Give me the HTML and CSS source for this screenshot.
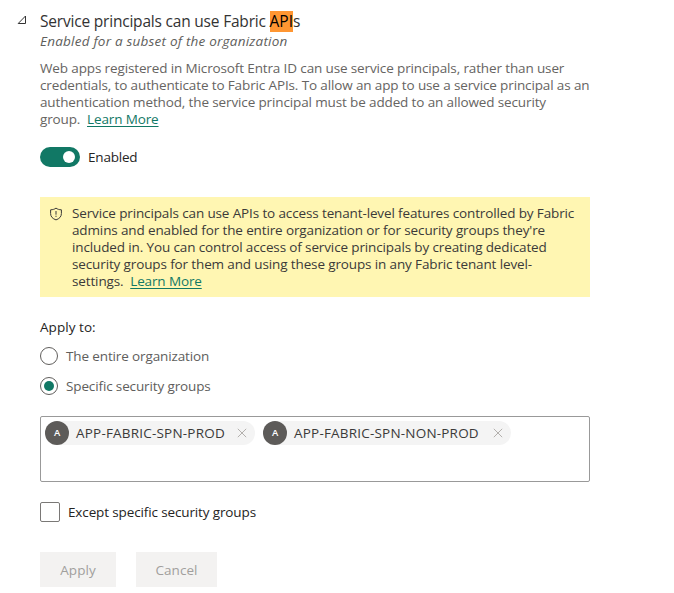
FILE: index.html
```html
<!DOCTYPE html>
<html lang="en">
<head>
<meta charset="utf-8">
<title>Tenant settings</title>
<link rel="stylesheet" href="styles.css">
</head>
<body>
<main class="setting">
  <svg class="caret" width="10" height="10" viewBox="0 0 10 10"><path d="M8.5 1v7.5H1.200z"/></svg>
  <div class="content">
    <h1 class="title">Service principals can use Fabric <mark>API</mark>s</h1>
    <p class="subtitle">Enabled for a subset of the organization</p>
    <p class="description">Web apps registered in Microsoft Entra ID can use service principals, rather than user<br>credentials, to authenticate to Fabric APIs. To allow an app to use a service principal as an<br>authentication method, the service principal must be added to an allowed security<br>group.&nbsp; <a href="#">Learn More</a></p>
    <div class="toggle-row"><span class="toggle"><span class="knob"></span></span><span class="enabled">Enabled</span></div>
    <div class="callout">
      <svg class="shield" width="14" height="14" viewBox="0 0 14 14"><path d="M7 1.1C8.5 2.3 10.200 2.700 12.400 2.800v3.700c0 3.200-2 5.200-5.400 6.400C3.600 11.700 1.600 9.700 1.600 6.500V2.800C3.800 2.700 5.500 2.300 7 1.100zM7 4v3.700M7 8.700v1.200"/></svg>
      <p>Service principals can use APIs to access tenant-level features controlled by Fabric<br>admins and enabled for the entire organization or for security groups they're<br>included in. You can control access of service principals by creating dedicated<br>security groups for them and using these groups in any Fabric tenant level-<br>settings.&nbsp; <a href="#">Learn More</a></p>
    </div>
    <p class="apply-to">Apply to:</p>
    <div class="radio-row"><span class="radio"></span><span>The entire organization</span></div>
    <div class="radio-row"><span class="radio checked"></span><span>Specific security groups</span></div>
    <div class="picker">
      <div class="chip chip-prod"><span class="avatar">A</span><span class="name">APP-FABRIC-SPN-PROD</span><svg class="remove" width="10" height="10" viewBox="0 0 10 10"><path d="M.8.8l8.400 8.400M9.200.8L.8 9.200"/></svg></div>
      <div class="chip chip-non-prod"><span class="avatar">A</span><span class="name">APP-FABRIC-SPN-NON-PROD</span><svg class="remove" width="10" height="10" viewBox="0 0 10 10"><path d="M.8.8l8.400 8.400M9.200.8L.8 9.200"/></svg></div>
    </div>
    <div class="check-row"><span class="checkbox"></span><span>Except specific security groups</span></div>
    <div class="actions"><button class="apply" disabled>Apply</button><button class="cancel" disabled>Cancel</button></div>
  </div>
</main>
</body>
</html>
```
FILE: styles.css
```css
* { box-sizing: border-box; }
body {
  margin: 0;
  background: #fff;
  color: #252423;
  font: 13.5px/17px "Open Sans", "Noto Sans", sans-serif;
  letter-spacing: -0.13px;
  white-space: nowrap;
}
h1, p { margin: 0; }
a { color: #117865; text-underline-offset: 2px; }
.setting { display: flex; padding: 10px 0 0 17px; }
.caret { margin: 5px 13px 0 0; fill: none; stroke: #333; }
.content { width: 550px; }
.title { font-size: 15.5px; font-weight: 400; line-height: 22px; letter-spacing: -0.2px; color: #333; }
mark { display: inline-block; line-height: 21px; background: #ff9632; color: #000; letter-spacing: 0; }
.subtitle { margin-top: 1px; font-style: italic; letter-spacing: 0.22px; color: #605e5c; }
.description { margin-top: 10px; color: #666462; }
.toggle-row { display: flex; align-items: center; gap: 8px; height: 20px; margin-top: 19px; }
.toggle { display: flex; justify-content: flex-end; align-items: center; width: 40px; height: 20px; padding-right: 5px; border-radius: 10px; background: #117865; }
.knob { width: 12px; height: 12px; border-radius: 50%; background: #fff; }
.enabled { letter-spacing: -0.2px; }
.callout { display: flex; height: 100px; margin-top: 30px; padding: 8px 0 0 9px; background: #fff6b2; color: #3b3a39; }
.shield { flex: none; margin: 2px 9px 0 0; fill: none; stroke: #3b3a39; }
.apply-to { margin: 22px 0 11px; letter-spacing: 0.05px; }
.radio-row { display: flex; align-items: center; gap: 8px; height: 18px; margin-bottom: 12px; color: #605e5c; }
.radio { display: flex; align-items: center; justify-content: center; width: 18px; height: 18px; border: 1px solid #605e5c; border-radius: 50%; }
.checked::before { content: ""; width: 10px; height: 10px; border-radius: 50%; background: #117865; }
.picker { display: flex; align-items: flex-start; gap: 8px; height: 66px; margin-top: 21px; padding: 4px; border: 1px solid #999; border-radius: 2px; }
.chip { display: flex; align-items: center; height: 24px; padding-right: 8px; border-radius: 12px; background: #f4f4f4; color: #3b3a39; }
.chip-prod { width: 210px; }
.chip-non-prod { width: 248px; }
.name { letter-spacing: 0.2px; }
.avatar { width: 24px; height: 24px; margin-right: 7px; border-radius: 50%; background: #5d5b59; color: #fff; font-size: 9.5px; font-weight: 600; line-height: 24px; text-align: center; }
.remove { margin-left: auto; fill: none; stroke: #b3b0ad; }
.check-row { display: flex; align-items: center; gap: 8px; height: 20px; margin-top: 20px; }
.checkbox { width: 20px; height: 20px; border: 1px solid #7a7876; border-radius: 2px; }
.actions { display: flex; gap: 20px; margin-top: 30px; }
button { width: 76px; height: 35px; padding: 2px 0 0; border: 0; background: #f3f2f1; color: #a19f9d; font: inherit; letter-spacing: 0.05px; }
.cancel { width: 81px; }
```
